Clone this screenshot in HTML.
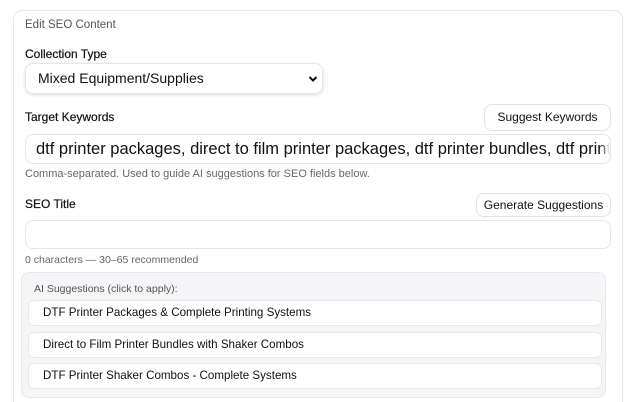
<!DOCTYPE html>
<html style="height:402px;overflow:hidden"><head><meta charset="utf-8"><style>
*{box-sizing:border-box;margin:0;padding:0}
body{width:632px;height:402px;background:#fff;font-family:"Liberation Sans",Arial,sans-serif;color:#111;position:relative;overflow:hidden}
.a{position:absolute;white-space:nowrap}
.card{left:13px;top:10px;width:610px;height:400px;border:1px solid #e8e8e8;border-bottom:none;border-radius:9px 9px 0 0}
.lbl{font-size:12px;color:#111;-webkit-text-stroke:0.2px #111}
.box{border:1px solid #e6e6e6;border-radius:8px;background:#fff}
.btn{border:1px solid #e3e3e3;border-radius:8px;background:#fff;font-size:12px;color:#111;text-align:center}
.help{font-size:11px;color:#666}
.item{left:28px;width:574px;height:26px;border:1px solid #e8e8e8;border-radius:6px;background:#fff;font-size:11.6px;padding-left:14px;line-height:24px}
</style></head><body>
<div class="a card"></div>
<div class="a" style="left:25px;top:19px;font-size:11.5px;color:#555">Edit SEO Content</div>
<div class="a lbl" style="left:25px;top:47px">Collection Type</div>
<div class="a box" style="left:25px;top:63px;width:298px;height:31px;box-shadow:0 1px 3px rgba(0,0,0,.15);font-size:14px;line-height:29px;padding-left:12px">Mixed Equipment/Supplies
<svg style="position:absolute;right:4px;top:11px" width="10" height="8" viewBox="0 0 10 8"><path d="M1.5 2 L5 5.5 L8.5 2" stroke="#111" stroke-width="2" fill="none"/></svg></div>
<div class="a lbl" style="left:25px;top:110px">Target Keywords</div>
<div class="a btn" style="left:484px;top:104px;width:127px;height:27px;line-height:25px">Suggest Keywords</div>
<div class="a box" style="left:25px;top:134px;width:586px;height:30px;overflow:hidden;font-size:16.5px;line-height:28px;padding-left:10px">dtf printer packages, direct to film printer packages, dtf printer bundles, dtf printer</div>
<div class="a" style="left:600px;top:136px;width:10px;height:26px;background:linear-gradient(to right,rgba(255,255,255,0),#fff);border-radius:0 8px 8px 0"></div>
<div class="a help" style="left:25px;top:168px">Comma-separated. Used to guide AI suggestions for SEO fields below.</div>
<div class="a lbl" style="left:25px;top:197px">SEO Title</div>
<div class="a btn" style="left:476px;top:193px;width:135px;height:24px;line-height:22px">Generate Suggestions</div>
<div class="a box" style="left:25px;top:220px;width:586px;height:29px"></div>
<div class="a help" style="left:25px;top:254px;font-size:10.5px">0 characters — 30–65 recommended</div>
<div class="a" style="left:21px;top:272px;width:585px;height:126px;background:#f5f5f7;border:1px solid #e8e8ec;border-radius:8px"></div>
<div class="a" style="left:34px;top:283px;font-size:10.5px;color:#555">AI Suggestions (click to apply):</div>
<div class="a item" style="top:300px">DTF Printer Packages &amp; Complete Printing Systems</div>
<div class="a item" style="top:332px">Direct to Film Printer Bundles with Shaker Combos</div>
<div class="a item" style="top:363px">DTF Printer Shaker Combos - Complete Systems</div>
</body></html>
